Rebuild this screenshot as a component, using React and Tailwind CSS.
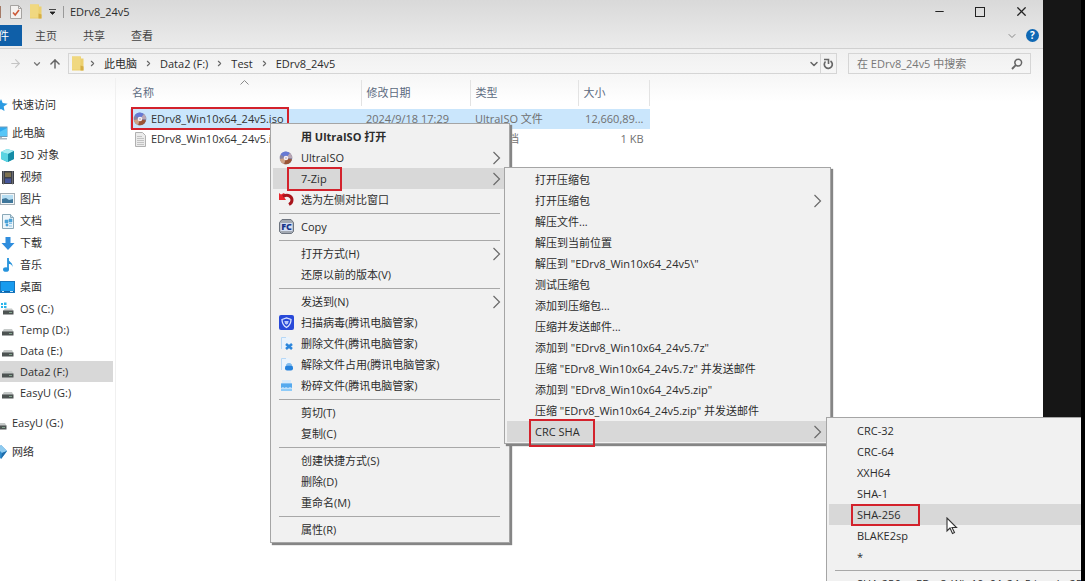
import { ChevronDown, ChevronRight, ArrowRight, ArrowUp, Minus, X } from "lucide-react";

const places = [
  { label: "3D 对象", icon: CubeIcon },
  { label: "视频", icon: VideoIcon },
  { label: "图片", icon: PictureIcon },
  { label: "文档", icon: DocumentIcon },
  { label: "下载", icon: DownloadIcon },
  { label: "音乐", icon: MusicIcon },
  { label: "桌面", icon: DesktopIcon },
];

const drives = [
  { label: "OS (C:)", icon: SystemDriveIcon },
  { label: "Temp (D:)", icon: DriveIcon },
  { label: "Data (E:)", icon: DriveIcon },
  { label: "Data2 (F:)", icon: DriveIcon, active: true },
  { label: "EasyU (G:)", icon: DriveIcon },
];

const files = [
  {
    name: "EDrv8_Win10x64_24v5.iso",
    date: "2024/9/18 17:29",
    type: "UltraISO 文件",
    size: "12,660,89...",
    icon: DiscIcon,
    selected: true,
  },
  {
    name: "EDrv8_Win10x64_24v5.ini",
    date: "",
    type: "文本文档",
    size: "1 KB",
    icon: TextFileIcon,
  },
];

const fileMenu = [
  { label: "用 UltraISO 打开", bold: true },
  { label: "UltraISO", icon: DiscIcon, sub: true },
  { label: "7-Zip", sub: true, active: true, mark: "zip" },
  { label: "选为左侧对比窗口", icon: CompareIcon },
  null,
  { label: "Copy", icon: FastCopyIcon },
  null,
  { label: "打开方式(H)", sub: true },
  { label: "还原以前的版本(V)" },
  null,
  { label: "发送到(N)", sub: true },
  { label: "扫描病毒(腾讯电脑管家)", icon: ShieldIcon },
  { label: "删除文件(腾讯电脑管家)", icon: DeleteFileIcon },
  { label: "解除文件占用(腾讯电脑管家)", icon: UnlockFileIcon },
  { label: "粉碎文件(腾讯电脑管家)", icon: ShredIcon },
  null,
  { label: "剪切(T)" },
  { label: "复制(C)" },
  null,
  { label: "创建快捷方式(S)" },
  { label: "删除(D)" },
  { label: "重命名(M)" },
  null,
  { label: "属性(R)" },
];

const zipMenu = [
  { label: "打开压缩包" },
  { label: "打开压缩包", sub: true },
  { label: "解压文件..." },
  { label: "解压到当前位置" },
  { label: '解压到 "EDrv8_Win10x64_24v5\\"' },
  { label: "测试压缩包" },
  { label: "添加到压缩包..." },
  { label: "压缩并发送邮件..." },
  { label: '添加到 "EDrv8_Win10x64_24v5.7z"' },
  { label: '压缩 "EDrv8_Win10x64_24v5.7z" 并发送邮件' },
  { label: '添加到 "EDrv8_Win10x64_24v5.zip"' },
  { label: '压缩 "EDrv8_Win10x64_24v5.zip" 并发送邮件' },
  { label: "CRC SHA", sub: true, active: true, mark: "crc" },
];

const hashMenu = [
  { label: "CRC-32" },
  { label: "CRC-64" },
  { label: "XXH64" },
  { label: "SHA-1" },
  { label: "SHA-256", active: true, mark: "sha" },
  { label: "BLAKE2sp" },
  { label: "*" },
  null,
  { label: "SHA-256 -> EDrv8_Win10x64_24v5.iso.sha256" },
];

const markClass = {
  zip: "-left-[14px] -right-[15px] -top-[2px] -bottom-[2px]",
  crc: "-left-[6px] -right-[15px] -top-[3px] -bottom-[5px]",
  sha: "-left-[6px] -right-[19px] -top-[1px] -bottom-[1px]",
};

function FolderIcon() {
  return (
    <svg width="13" height="15" viewBox="0 0 13 15" className="shrink-0">
      <path d="M1 .5h9v2h2.500v12H1z" fill="#ecd06e" />
      <path d="M1 .5h8.500v13H1z" fill="#f0d880" />
      <path d="M9.500 9.500l3 1v4h-3z" fill="#d5ae45" />
    </svg>
  );
}

function CheckPageIcon() {
  return (
    <svg width="14" height="16" viewBox="0 0 14 16">
      <path d="M1.500 1.500h8l3 3v10h-11z" fill="#f3f1f0" stroke="#a5a3a1" />
      <path d="M9.500 1.500v3h3" fill="none" stroke="#a5a3a1" />
      <path d="M4 8.500l2.200 2.500L10 6" fill="none" stroke="#cc5a38" strokeWidth="1.600" />
    </svg>
  );
}

function RefreshIcon() {
  return (
    <svg width="11" height="12" viewBox="0 0 11 12">
      <path d="M7.500 3a4 4 0 1 1-5 .5" fill="none" stroke="#666" strokeWidth="1.700" />
      <path d="M1 1.500h4.500V6" fill="none" stroke="#666" strokeWidth="1.600" />
    </svg>
  );
}

function SearchIcon() {
  return (
    <svg width="12" height="12" viewBox="0 0 12 12">
      <circle cx="7.200" cy="4.600" r="3.400" fill="none" stroke="#666" strokeWidth="1.500" />
      <path d="M4.800 7.200L1 11" stroke="#666" strokeWidth="1.900" />
    </svg>
  );
}

function StarIcon() {
  return (
    <svg width="16" height="14" viewBox="0 0 16 14">
      <path d="M9 1l1.700 4 5 .8-4 2.800.8 4.400L9 11l-4 2 .8-4.400L2 5.800 7.200 5z" fill="#2b9be2" />
    </svg>
  );
}

function ComputerIcon() {
  return (
    <svg width="16" height="15" viewBox="0 0 16 15">
      <rect x="0" y="1" width="15" height="9.500" fill="#2fa8ee" stroke="#6b9dbd" />
      <path d="M0 10L15 2v8z" fill="#57c6f7" />
      <path d="M6 11h4v1h5v1.500H3V12h3z" fill="#a9b7c1" />
    </svg>
  );
}

function NetworkIcon() {
  return (
    <svg width="16" height="16" viewBox="0 0 16 16">
      <path d="M9 1l6 6-6 8-6-7z" fill="#2f8ccd" />
      <path d="M9 1l6 6-5 2-4-4z" fill="#8fcbf0" />
      <path d="M10 9l5-2-6 8z" fill="#1f6cab" />
    </svg>
  );
}

function CubeIcon() {
  return (
    <svg width="15" height="15" viewBox="0 0 15 15">
      <path d="M1 4l6-3 7 2v8l-7 3-6-3z" fill="#39bcd0" />
      <path d="M1 4l6-3 7 2-6 3z" fill="#a6edf3" />
      <path d="M8 6l6-3v8l-6 3z" fill="#158ca6" />
      <path d="M1 4l7 2v8l-7-3z" fill="#5ad4e2" />
    </svg>
  );
}

function VideoIcon() {
  return (
    <svg width="14" height="15" viewBox="0 0 14 15">
      <rect x="1" y="1" width="12" height="13" fill="#3e4148" />
      <path d="M2.500 1.500v13M11.500 1.500v13" stroke="#9a9ca3" strokeDasharray="1 1" />
      <rect x="4" y="2.500" width="6" height="4.500" fill="#7e7250" />
      <rect x="4" y="8.500" width="6" height="4.500" fill="#46569a" />
    </svg>
  );
}

function PictureIcon() {
  return (
    <svg width="15" height="12" viewBox="0 0 15 12">
      <rect x=".5" y=".5" width="14" height="11" fill="#f2f5f7" stroke="#a3aeb5" />
      <rect x="2" y="2" width="11" height="8" fill="#b5ddf2" />
      <path d="M2 6l4-1 3 2 4-1v4H2z" fill="#3f779b" />
    </svg>
  );
}

function DocumentIcon() {
  return (
    <svg width="14" height="15" viewBox="0 0 14 15">
      <path d="M1.500 .5h8l3 3v11h-11z" fill="#edf6fb" stroke="#8aa9b9" />
      <path d="M9.500 .5v3h3" fill="#c7dce8" stroke="#8aa9b9" />
      <path d="M4 6h3v3H4zM8 5h3v3H8zM5 10h2v2H5zM8 9.500h3M8 12h3" fill="#4ba3d7" stroke="#4ba3d7" strokeWidth=".6" />
    </svg>
  );
}

function DownloadIcon() {
  return (
    <svg width="14" height="15" viewBox="0 0 14 15">
      <path d="M4.500 1h5v6h4L7 14 .5 7h4z" fill="#2f8ddd" />
    </svg>
  );
}

function MusicIcon() {
  return (
    <svg width="14" height="16" viewBox="0 0 14 16">
      <path d="M6.500 1c1 4 5.500 4 5 9-.5-2.500-2-3-4-3z" fill="#2693dc" />
      <path d="M7 1v11" stroke="#2693dc" strokeWidth="1.800" />
      <ellipse cx="5" cy="12.500" rx="3" ry="2.300" fill="#2693dc" />
    </svg>
  );
}

function DesktopIcon() {
  return (
    <svg width="15" height="13" viewBox="0 0 15 13">
      <rect x=".5" y=".5" width="14" height="11" fill="#189bee" stroke="#1675bd" />
      <path d="M1 10.500h13" stroke="#0e62a5" />
      <path d="M2 10.500h2M10 10.500h3" stroke="#c3e5fa" />
    </svg>
  );
}

function DriveIcon() {
  return (
    <svg width="13" height="15" viewBox="0 0 13 15">
      <path d="M3 7h8l1.500 3H1z" fill="#c5c9c8" />
      <rect x="1" y="9.500" width="11.500" height="4" fill="#4d5352" />
      <path d="M8 11.500h3" stroke="#83a58e" />
    </svg>
  );
}

function SystemDriveIcon() {
  return (
    <svg width="13" height="15" viewBox="0 0 13 15">
      <path d="M0 2h2v2H0zM3 1.500h2.500V4H3zM0 5h2v2H0zM3 5h2.500v2H3z" fill="#28b5ec" />
      <path d="M4 7.500h7l1.500 2.500H2z" fill="#c5c9c8" />
      <rect x="2" y="9.500" width="10.500" height="4" fill="#4d5352" />
      <path d="M8 11.500h3" stroke="#83a58e" />
    </svg>
  );
}

function DiscIcon() {
  return (
    <svg width="14" height="14" viewBox="0 0 14 14">
      <circle cx="7" cy="7" r="6.300" fill="#8783a0" />
      <path d="M7 7L1.500 3.500A6.300 6.300 0 0 1 11 2z" fill="#6679d4" />
      <path d="M7 7l6 1.500A6.300 6.300 0 0 1 5 13z" fill="#9b5535" />
      <path d="M7 7L.8 8A6.300 6.300 0 0 0 5 13z" fill="#cda286" />
      <path d="M7 7l4-5a6.300 6.300 0 0 1 2.200 5z" fill="#b9a7b5" />
      <circle cx="7" cy="7" r="2.300" fill="#f5eef3" />
      <circle cx="7" cy="7" r=".8" fill="#aaa0ad" />
    </svg>
  );
}

function TextFileIcon() {
  return (
    <svg width="13" height="15" viewBox="0 0 13 15">
      <path d="M1.500 .5h7l3 3v11h-10z" fill="#ebebeb" stroke="#b0b0b0" />
      <path d="M3 4.500h5M3 6.500h7M3 8.500h7M3 10.500h7M3 12.500h7" stroke="#c2c2c2" />
    </svg>
  );
}

function CompareIcon() {
  return (
    <svg width="15" height="15" viewBox="0 0 15 15" className="shrink-0">
      <path d="M0 1l2 1.500L5 1l1.500 2L5 5l2 3H0z" fill="#e8252c" />
      <path d="M4 4.500c5-3 9 0 9 3.500 0 2-1 3.500-3 4.500" fill="none" stroke="#a8151c" strokeWidth="3" />
    </svg>
  );
}

function FastCopyIcon() {
  return (
    <svg width="15" height="15" viewBox="0 0 15 15" className="shrink-0">
      <path d="M3 .5h9l2.500 3v9l-2 2h-10l-2-2v-9z" fill="#a3a9b2" stroke="#6d747f" />
      <rect x="1.500" y="4" width="12" height="8" fill="#d5dff2" />
      <text x="7.500" y="11" textAnchor="middle" fontSize="9" fontWeight="800" fill="#1a3689">FC</text>
    </svg>
  );
}

function ShieldIcon() {
  return (
    <svg width="15" height="15" viewBox="0 0 15 15" className="shrink-0">
      <rect width="15" height="15" rx="2" fill="#2849d8" />
      <path d="M3 4.500L7.500 3 12 4.500c0 4-2 6.500-4.500 8C5 11 3 8.500 3 4.500z" fill="none" stroke="#dbe4ff" strokeWidth="1.300" />
      <path d="M5.300 6h4.400l-.7 2.500-1.500 1.300L6 8.500z" fill="#b9c8fa" />
    </svg>
  );
}

function DeleteFileIcon() {
  return (
    <svg width="15" height="15" viewBox="0 0 15 15" className="shrink-0">
      <path d="M2 1h8l2 2v10H2z" fill="#eaf3fc" />
      <path d="M2.500 13V1.500H7" fill="none" stroke="#b7d8f6" />
      <path d="M7 8l6 5M13 8l-6 5" stroke="#2c86dc" strokeWidth="2.600" />
    </svg>
  );
}

function UnlockFileIcon() {
  return (
    <svg width="15" height="15" viewBox="0 0 15 15" className="shrink-0">
      <path d="M2 1h8l2 2v10H2z" fill="#eaf3fc" />
      <path d="M2.500 13V1.500H7" fill="none" stroke="#b7d8f6" />
      <path d="M7.500 8.500V8a2.500 1.500 0 0 1 5 0v.5" fill="#7fbcf0" stroke="#7fbcf0" />
      <rect x="6" y="8.500" width="8" height="5" rx="2" fill="#2482dd" />
    </svg>
  );
}

function ShredIcon() {
  return (
    <svg width="15" height="14" viewBox="0 0 15 14" className="shrink-0">
      <path d="M3 1h9v5H3z" fill="#d7eafb" />
      <path d="M2 4.500h11V12H2z" fill="#8ecbf8" />
      <path d="M2 4.500h11V9H2z" fill="#54a9ee" />
      <path d="M2 9l2-1 1.500 1L7 8l2 1 2-1 2 1v1H2z" fill="#bfe0fb" />
    </svg>
  );
}

function Crumb({ children }) {
  return (
    <>
      <ChevronRight size={9} strokeWidth={3} className="mx-[7px] shrink-0 text-[#666]" />
      <button className="whitespace-nowrap">{children}</button>
    </>
  );
}

function SideItem({ item, root, className }) {
  const Icon = item.icon;
  return (
    <a
      href="#"
      className={`flex items-center whitespace-nowrap ${item.active ? "bg-[#d8d8d8]" : ""} ${className}`}
    >
      <span className={root ? "-ml-2 mr-1 flex w-4 justify-center" : "mr-[5px] flex w-[15px] justify-center"}>
        <Icon />
      </span>
      {item.label}
    </a>
  );
}

function MenuItem({ item }) {
  const Icon = item.icon;
  return (
    <button
      role="menuitem"
      className={`flex h-[21px] w-full items-center gap-2 whitespace-nowrap pl-[6px] pr-[6px] text-left ${
        item.active ? "bg-[#d8d8d8]" : ""
      } ${item.bold ? "font-bold" : ""}`}
    >
      <span className="flex w-[14px] shrink-0 justify-center">{Icon && <Icon />}</span>
      <span className="relative leading-5">
        {item.label}
        {item.mark && (
          <span className={`absolute border-2 border-[#d3222c] ${markClass[item.mark]}`} />
        )}
      </span>
      {item.sub && (
        <svg width="9" height="14" viewBox="0 0 9 14" className="ml-auto">
          <path d="M1.500 1l6 6-6 6" fill="none" stroke="#6a6a6a" strokeWidth="1.200" />
        </svg>
      )}
    </button>
  );
}

function Menu({ items, className }) {
  return (
    <div
      role="menu"
      className={`absolute border border-[#a5a5a5] bg-[#f1f1f1] px-[2px] shadow-[2px_2px_1px_#858585] ${className}`}
    >
      {items.map((item, i) =>
        item ? (
          <MenuItem key={i} item={item} />
        ) : (
          <hr key={i} className="mb-[2px] ml-[6px] mr-[7px] mt-[3px] border-[#a8a8a8]" />
        )
      )}
    </div>
  );
}

function TitleBar() {
  return (
    <div className="flex h-[23px] items-center">
      <span className="h-3 w-px bg-[#a47a67]" />
      <button aria-label="属性" className="ml-2"><CheckPageIcon /></button>
      <button aria-label="新建文件夹" className="ml-[6px]"><FolderIcon /></button>
      <svg width="9" height="8" viewBox="0 0 9 8" className="ml-[6px]">
        <path d="M1 1.500h7M2 4h5L4.500 6.500z" fill="#222" stroke="#222" strokeWidth=".8" />
      </svg>
      <span className="ml-[6px] mr-[6px] h-3 w-px bg-[#999]" />
      <h1>EDrv8_24v5</h1>
      <div className="ml-auto flex items-center gap-[29px] pr-[14px] text-[#222]">
        <button aria-label="最小化"><Minus size={13} strokeWidth={2} /></button>
        <button aria-label="最大化" className="size-[10px] border border-[#222]" />
        <button aria-label="关闭"><X size={15} strokeWidth={2} /></button>
      </div>
    </div>
  );
}

function Ribbon() {
  return (
    <div className="flex h-[26px] items-center border-b border-[#d0d0d0] text-[#444]">
      <button className="flex h-[21px] w-[22px] items-center justify-end overflow-hidden whitespace-nowrap bg-[#0f5fa8] pr-[13px] text-white">
        文件
      </button>
      <button className="px-[13px]">主页</button>
      <button className="px-[13px]">共享</button>
      <button className="px-[13px]">查看</button>
      <ChevronDown size={12} className="ml-auto text-[#888]" />
      <button aria-label="帮助" className="ml-2 mr-1 size-[13px] rounded-full bg-[#0f68b4] text-[10px] font-bold leading-[13px] text-white">
        ?
      </button>
    </div>
  );
}

function AddressBar() {
  return (
    <div className="flex items-center pb-1 pl-[9px] pr-3 pt-1">
      <ArrowRight size={13} className="text-[#c4c4c4]" />
      <ChevronDown size={10} strokeWidth={3} className="ml-[10px] text-[#777]" />
      <ArrowUp size={14} strokeWidth={2.500} className="ml-[6px] text-[#666]" />
      <div className="ml-[6px] flex h-[21px] flex-1 items-center border border-[#d5d5d5] pl-[2px]">
        <span className="-mr-[3px]"><FolderIcon /></span>
        <Crumb>此电脑</Crumb>
        <Crumb>Data2 (F:)</Crumb>
        <Crumb>Test</Crumb>
        <Crumb>EDrv8_24v5</Crumb>
        <ChevronDown size={12} strokeWidth={3} className="ml-auto text-[#666]" />
        <button aria-label="刷新" className="flex h-full w-4 items-center justify-center border-l border-[#d5d5d5]">
          <RefreshIcon />
        </button>
      </div>
      <label className="ml-[11px] flex h-[21px] w-[183px] items-center border border-[#d5d5d5] px-[7px]">
        <input
          aria-label="搜索"
          placeholder="在 EDrv8_24v5 中搜索"
          className="min-w-0 flex-1 pl-px outline-none placeholder:text-[#777]"
        />
        <SearchIcon />
      </label>
    </div>
  );
}

function Sidebar() {
  return (
    <nav className="w-[113px] shrink-0 pt-4 text-[#303030]">
      <SideItem root item={{ label: "快速访问", icon: StarIcon }} className="mb-[6px] h-[22px]" />
      <SideItem root item={{ label: "此电脑", icon: ComputerIcon }} className="h-[22px]" />
      {places.map((p) => (
        <SideItem key={p.label} item={p} className="h-[22px]" />
      ))}
      {drives.map((d) => (
        <SideItem key={d.label} item={d} className="h-[21px]" />
      ))}
      <SideItem root item={{ label: "EasyU (G:)", icon: DriveIcon }} className="mb-[7px] mt-[9px] h-[22px]" />
      <SideItem root item={{ label: "网络", icon: NetworkIcon }} className="h-[22px]" />
    </nav>
  );
}

function FileTable() {
  return (
    <table className="w-[520px] table-fixed border-collapse">
      <thead>
        <tr className="h-[26px] text-left text-[#5b6a80]">
          <th className="relative w-[231px] border-r border-[#e3e3e3] pl-[2px] font-normal">
            名称
            <svg width="9" height="5" viewBox="0 0 9 5" className="absolute left-[110px] top-0">
              <path d="M.5 4.500l4-4 4 4" fill="none" stroke="#8a8a8a" />
            </svg>
          </th>
          <th className="w-[109px] border-r border-[#e3e3e3] pl-[5px] font-normal">修改日期</th>
          <th className="w-[108px] border-r border-[#e3e3e3] pl-[5px] font-normal">类型</th>
          <th className="border-r border-[#e3e3e3] pl-[5px] font-normal">大小</th>
        </tr>
        <tr className="h-[3px]" />
      </thead>
      <tbody className="whitespace-nowrap text-[#707070]">
        {files.map((f) => {
          const Icon = f.icon;
          return (
            <tr key={f.name} className={`h-5 ${f.selected ? "bg-[#cae6fc]" : ""}`}>
              <td>
                <div className="relative flex h-5 items-center gap-1 pl-[3px] text-[#333]">
                  <span className="flex w-[14px] justify-center"><Icon /></span>
                  {f.name}
                  {f.selected && (
                    <span className="absolute -top-[2px] left-[1px] h-[23px] w-[158px] border-2 border-[#d3222c]" />
                  )}
                </div>
              </td>
              <td className="pl-[5px]">{f.date}</td>
              <td className="pl-[5px]">{f.type}</td>
              <td className="pr-[6px] text-right">{f.size}</td>
            </tr>
          );
        })}
      </tbody>
    </table>
  );
}

export default function App() {
  return (
    <div className="relative flex h-screen overflow-hidden bg-[#161616] font-['Open_Sans','Noto_Sans_CJK_SC',sans-serif] text-[11px] leading-4 text-[#2c2c2c]">
      <div className="flex min-w-0 flex-1 flex-col bg-white">
        <header className="bg-linear-to-b from-[#d9d9d9] to-[#ececec]">
          <TitleBar />
          <Ribbon />
        </header>
        <div className="bg-linear-to-b from-[#f0f0f0] to-[#f7f7f7]">
          <AddressBar />
        </div>
        <div className="flex flex-1 bg-linear-to-b from-[#f7f7f7] to-white to-[24px]">
          <Sidebar />
          <main className="ml-[2px] flex-1 border-l border-[#f0f0f0] pl-[14px] pt-[2px]">
            <FileTable />
          </main>
        </div>
      </div>
      <div className="w-[38px] shrink-0" />

      <Menu items={fileMenu} className="left-[270px] top-[123px] w-[240px] py-[2px]" />
      <Menu items={zipMenu} className="left-[504px] top-[167px] w-[327px] py-px" />
      <Menu items={hashMenu} className="left-[826px] top-[417px] w-[290px] py-[2px]" />

      {/* mouse pointer */}
      <svg width="12" height="18" viewBox="0 0 12 18" className="absolute left-[946px] top-[517px]">
        <path d="M1 1v13l3-3 2.500 5.500 2-1L6 10.500h4.500z" fill="#fff" stroke="#333" strokeWidth="1.100" />
      </svg>
      <div className="relative w-1 shrink-0 bg-black" />
    </div>
  );
}
